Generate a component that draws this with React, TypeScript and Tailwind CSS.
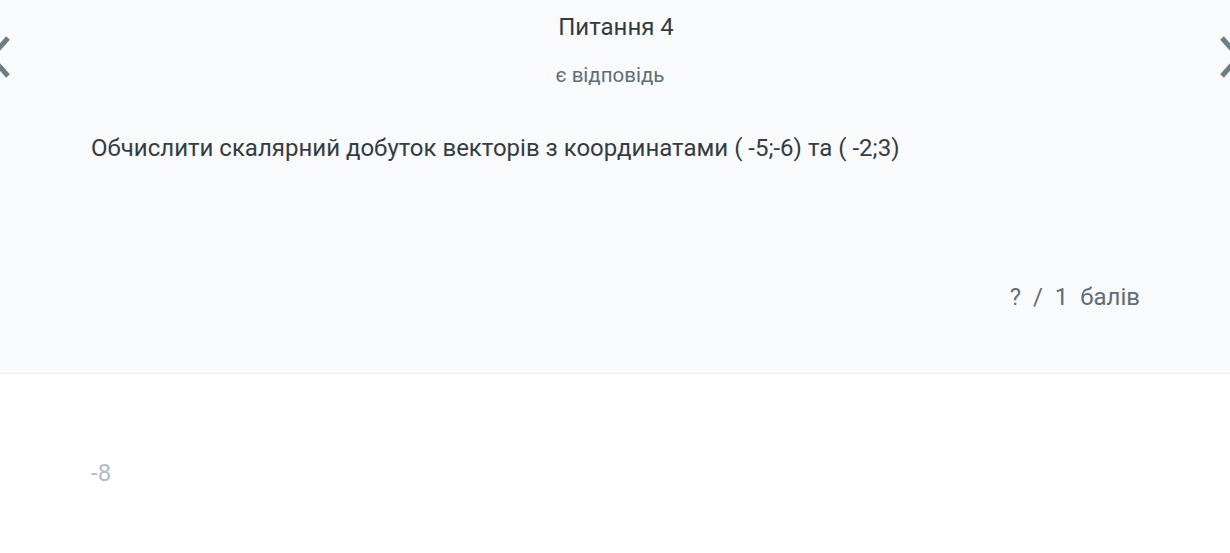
export default function App() {
  return (
    <div className="relative w-[1230px] h-[553px] overflow-hidden bg-white" style={{ fontFamily: "Roboto, 'Noto Sans', sans-serif" }}>
      <div className="bg-[#f9fafc] border-b border-[#e9ebee] h-[374px] flex flex-col">
        <div className="pt-[12px] pl-[2px] text-center text-[24px] leading-[30px] text-[#333b42]">Питання 4</div>
        <div className="mt-[20px] pr-[10px] text-center text-[20.5px] leading-[26px] text-[#5f6d78]">є відповідь</div>
        <div className="mt-[44px] px-[91px] text-[24px] leading-[32px] text-[#343c44]">
          Обчислити скалярний добуток векторів з координатами ( -5;-6) та ( -2;3)
        </div>
        <div className="mt-[117px] pr-[90px] flex justify-end text-[24px] leading-[32px] text-[#5f6d78] whitespace-pre">
          ?  /  1  балів
        </div>
      </div>
      <div className="pt-[83px] px-[91px] text-[24px] leading-[32px] text-[#b3bcc3]">-8</div>

      <svg className="absolute left-0 top-[34px] overflow-visible" width="14" height="46" viewBox="0 0 14 46">
        <polyline points="8,4 -9,23 8,42" fill="none" stroke="#6b7d88" strokeWidth="5" />
      </svg>
      <svg className="absolute right-0 top-[34px] overflow-visible" width="14" height="46" viewBox="0 0 14 46">
        <polyline points="6,4 23,23 6,42" fill="none" stroke="#6b7d88" strokeWidth="5" />
      </svg>
    </div>
  );
}
